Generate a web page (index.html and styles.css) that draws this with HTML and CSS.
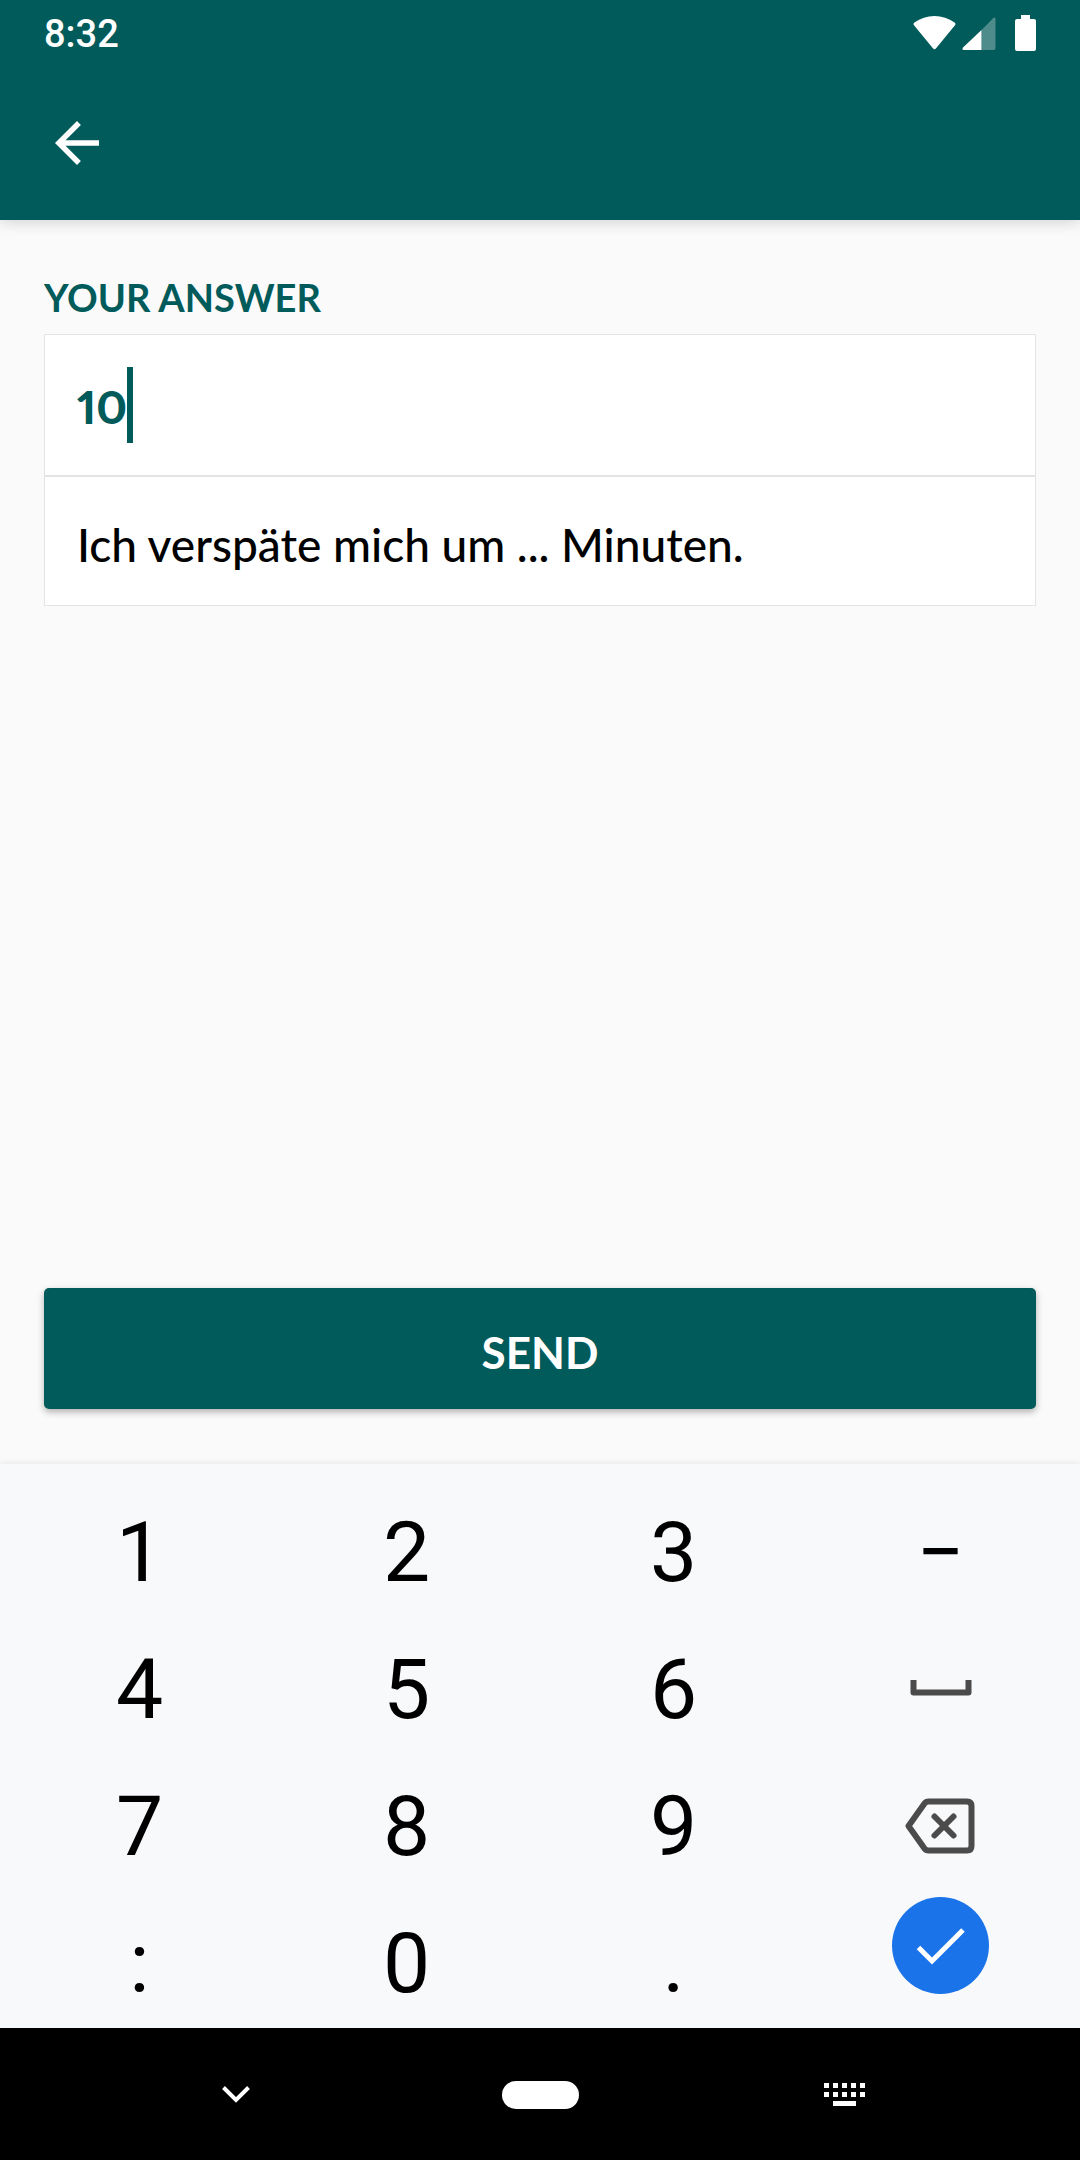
FILE: index.html
```html
<!DOCTYPE html>
<html lang="en">
<head>
<meta charset="utf-8">
<meta name="viewport" content="width=device-width, initial-scale=1">
<title>Your answer</title>
<link rel="stylesheet" href="styles.css">
</head>
<body>
<div class="screen">
  <header class="header">
    <div class="status">
      <time class="clock">8:32</time>
      <div class="indicators">
        <svg class="wifi" width="43" height="36" viewBox="0 0 43 36" aria-label="Wi-Fi"><path d="M1.2 10.4Q-.3 9 1.4 7.6C7.500 3.200 14 1 21.500 1S35.500 3.200 41.600 7.600Q43.300 9 41.800 10.400L22.900 33.400Q21.500 35 20.100 33.400Z"/></svg>
        <svg class="signal" width="34" height="36" viewBox="0 0 34 36" aria-label="Signal"><path opacity=".3" d="M31.200 3.200Q33.500 1.400 33.500 4V33Q33.500 35 31.500 35H19.500V15Z"/><path d="M19.500 15V35H1.800Q-.4 34.600 1 32.500Z"/></svg>
        <svg class="battery" width="21" height="36" viewBox="0 0 21 36" aria-label="Battery"><path d="M6 0H15V4H19Q21 4 21 6V34Q21 36 19 36H2Q0 36 0 34V6Q0 4 2 4H6Z"/></svg>
      </div>
    </div>
    <nav class="toolbar">
      <button class="back" type="button" aria-label="Back">
        <svg width="66" height="66" viewBox="0 0 24 24"><path d="M20 11H7.830l5.590-5.590L12 4l-8 8 8 8 1.410-1.410L7.830 13H20z"/></svg>
      </button>
    </nav>
  </header>

  <main class="content">
    <form class="form" id="answer-form">
      <label class="label" for="answer">YOUR ANSWER</label>
      <div class="card">
        <div class="entry">
          <input class="answer" id="answer" type="text" inputmode="numeric" value="10">
          <span class="caret"></span>
        </div>
        <p class="prompt">Ich verspäte mich um ... Minuten.</p>
      </div>
      <button class="send" type="submit">SEND</button>
    </form>
  </main>

  <section class="keyboard" aria-label="Number pad">
    <button class="key" type="button">1</button>
    <button class="key" type="button">2</button>
    <button class="key" type="button">3</button>
    <button class="key" type="button">−</button>
    <button class="key" type="button">4</button>
    <button class="key" type="button">5</button>
    <button class="key" type="button">6</button>
    <button class="key key-icon" type="button" aria-label="Space">
      <svg width="62" height="20" viewBox="0 0 62 20"><path class="line" d="M3.500 1V13.500H58.500V1"/></svg>
    </button>
    <button class="key" type="button">7</button>
    <button class="key" type="button">8</button>
    <button class="key" type="button">9</button>
    <button class="key key-icon" type="button" aria-label="Delete">
      <svg width="72" height="56" viewBox="0 0 72 56"><path class="line" d="M3.500 28L19.500 5.500Q21 3.500 23.500 3.500H62Q66.500 3.500 66.500 8V48Q66.500 52.500 62 52.500H23.500Q21 52.500 19.500 50.500Z"/><path class="line round" d="M29.500 18.500L48.500 37.500M48.500 18.500L29.500 37.500"/></svg>
    </button>
    <button class="key" type="button">:</button>
    <button class="key" type="button">0</button>
    <button class="key" type="button">.</button>
    <button class="key key-icon key-done" type="button" aria-label="Done">
      <svg width="97" height="97" viewBox="0 0 97 97"><circle class="disc" cx="48.500" cy="48.500" r="48.500"/><path class="tick" d="M26.500 50.500L40 64L71 33"/></svg>
    </button>
  </section>

  <nav class="navbar">
    <button class="nav" type="button" aria-label="Hide keyboard">
      <svg width="28" height="18" viewBox="0 0 28 18"><path class="chevron" d="M1.500 1.500L14 14L26.500 1.500"/></svg>
    </button>
    <button class="nav" type="button" aria-label="Home"><span class="pill"></span></button>
    <button class="nav" type="button" aria-label="Switch keyboard">
      <svg width="42" height="24" viewBox="0 0 42 24"><path d="M0 0h5v5H0zM9 0h5v5H9zM18 0h5v5h-5zM27 0h5v5h-5zM36 0h5v5h-5zM0 9h5v5H0zM9 9h5v5H9zM18 9h5v5h-5zM27 9h5v5h-5zM36 9h5v5h-5zM9 18h23v5H9z"/></svg>
    </button>
  </nav>
</div>
</body>
</html>
```
FILE: styles.css
```css
* {
  box-sizing: border-box;
}

body {
  margin: 0;
  background: #fafafa;
  font-family: Lato, "Noto Sans", sans-serif;
}

button {
  margin: 0;
  padding: 0;
  border: 0;
  background: none;
  color: inherit;
  font: inherit;
}

svg {
  display: block;
}

.screen {
  display: flex;
  flex-direction: column;
  min-height: 100vh;
}

.header {
  background: #025b5b;
  color: #fff;
  fill: #fff;
  box-shadow: 0 2px 14px rgba(0, 0, 0, 0.16);
}

.status {
  display: flex;
  align-items: center;
  justify-content: space-between;
  height: 66px;
  padding: 0 44px;
}

.clock {
  padding-top: 2px;
  font: 500 38px/64px Roboto, sans-serif;
}

.indicators {
  display: flex;
  gap: 6px;
}

.battery {
  margin-left: 13px;
}

.toolbar {
  display: flex;
  align-items: center;
  height: 154px;
  padding: 0 44px;
}

.content {
  display: flex;
  flex: 1;
  padding: 52px 44px 55px;
}

.form {
  display: flex;
  flex: 1;
  flex-direction: column;
}

.label {
  margin-bottom: 12px;
  color: #025b5b;
  font-size: 38px;
  font-weight: 700;
  line-height: 50px;
}

.card {
  border: 1px solid #e4e4e4;
  background: #fff;
}

.entry {
  display: flex;
  align-items: center;
  height: 142px;
  padding: 0 32px;
  border-bottom: 2px solid #e4e4e4;
}

.answer {
  field-sizing: content;
  padding: 4px 0 0;
  border: 0;
  outline: 0;
  background: none;
  color: #025b5b;
  font: 900 46px/72px Lato, "Noto Sans", sans-serif;
  font-variant-numeric: proportional-nums;
}

.caret {
  width: 6px;
  height: 76px;
  background: #025b5b;
}

.prompt {
  margin: 0;
  padding: 8px 32px 0;
  color: #000;
  font-size: 46px;
  font-weight: 500;
  line-height: 120px;
}

.send {
  height: 121px;
  margin-top: auto;
  padding-top: 6px;
  border-radius: 5px;
  background: #025b5b;
  box-shadow: 0 3px 7px rgba(0, 0, 0, 0.3);
  color: #fff;
  font-size: 44px;
  font-weight: 700;
}

.keyboard {
  display: grid;
  grid-template-columns: repeat(4, 1fr);
  grid-auto-rows: 137px;
  padding: 16px 6px 0;
  background: #f8f9fb;
  box-shadow: 0 -1px 6px rgba(0, 0, 0, 0.08);
}

.key {
  display: flex;
  align-items: center;
  justify-content: center;
  padding-top: 8px;
  color: #000;
  font: 400 84px/100px Roboto, sans-serif;
}

.key-icon {
  padding-top: 6px;
}

.key-done {
  align-items: flex-start;
}

.line {
  fill: none;
  stroke: #4b4b4b;
  stroke-width: 6;
  stroke-linejoin: round;
}

.round {
  stroke-linecap: round;
}

.disc {
  fill: #1a73e8;
}

.tick {
  fill: none;
  stroke: #fff;
  stroke-width: 5;
}

.navbar {
  display: grid;
  grid-template-columns: 1fr 138px 1fr;
  height: 132px;
  background: #000;
}

.nav {
  display: flex;
  align-items: center;
  justify-content: center;
  padding-top: 2px;
  fill: #fff;
}

.chevron {
  fill: none;
  stroke: #fff;
  stroke-width: 4;
}

.pill {
  width: 77px;
  height: 28px;
  border-radius: 14px;
  background: #fff;
}
```
